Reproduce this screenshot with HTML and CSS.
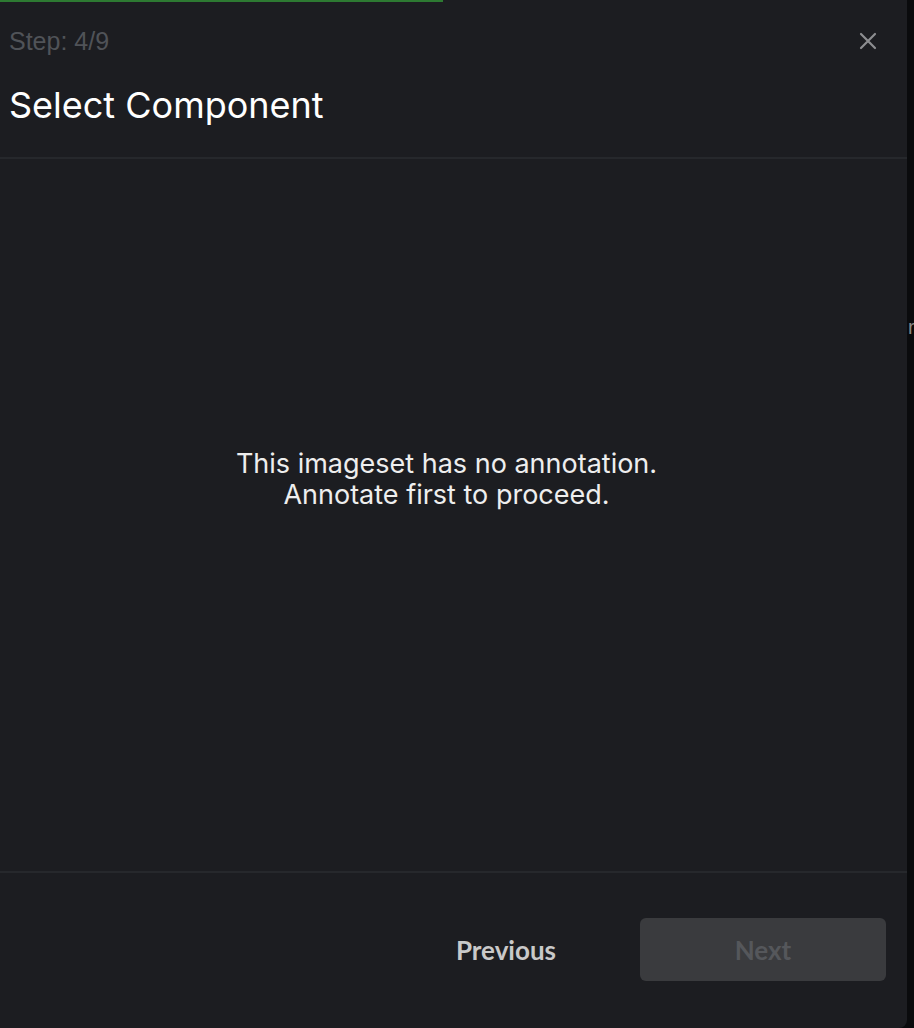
FILE: index.html
```html
<!DOCTYPE html>
<html>
<head>
<meta charset="utf-8">
<link rel="stylesheet" href="styles.css">
</head>
<body>
<div class="page">
  <section class="modal">
    <div class="progress"><div class="progress-fill" style="width:443px"></div></div>
    <header class="modal-header">
      <div class="header-top">
        <span class="step">Step: 4/9</span>
        <button class="close" aria-label="Close">
          <svg width="18" height="18" viewBox="0 0 18 18"><path d="M2 2L16 16M16 2L2 16" stroke="#8c8d90" stroke-width="2.2" stroke-linecap="round"/></svg>
        </button>
      </div>
      <h1 class="title">Select Component</h1>
    </header>
    <main class="modal-body">
      <p class="empty">This imageset has no annotation.<br>Annotate first to proceed.</p>
    </main>
    <footer class="modal-footer">
      <button class="btn-prev">Previous</button>
      <button class="btn-next" disabled>Next</button>
    </footer>
  </section>
  <aside class="strip"><span class="strip-char">r</span></aside>
</div>
</body>
</html>
```
FILE: styles.css
```css
* { box-sizing: border-box; }
html, body { margin: 0; padding: 0; }
body {
  background: #0a0b0d;
  font-family: Inter, "Liberation Sans", sans-serif;
  width: 914px;
  height: 1028px;
  overflow: hidden;
}
.page { display: flex; height: 1028px; }
.modal {
  width: 907px;
  height: 1028px;
  background: #1c1d21;
  border-bottom-right-radius: 8px;
  display: flex;
  flex-direction: column;
}
.progress { height: 2px; background: transparent; }
.progress-fill { height: 2px; background: #2d7a32; }
.modal-header {
  padding: 26px 30px 0 9px;
  height: 157px;
  border-bottom: 2px solid #26282c;
}
.header-top {
  display: flex;
  justify-content: space-between;
  align-items: center;
  height: 26px;
}
.step {
  color: #505358;
  font-size: 25px;
  font-family: "Liberation Sans", Arial, sans-serif;
}
.close {
  background: none;
  border: 0;
  padding: 0;
  width: 18px;
  height: 18px;
  display: flex;
}
.title {
  margin: 31px 0 0 0;
  font-weight: 400;
  font-size: 36px;
  line-height: 40px;
  color: #ffffff;
  font-family: Inter, "Liberation Sans", sans-serif;
}
.modal-body {
  flex: 1;
  display: flex;
  align-items: center;
  justify-content: center;
  padding-bottom: 72px;
  border-bottom: 2px solid #26282c;
}
.empty {
  margin: 0;
  text-align: center;
  color: #eeeeee;
  font-size: 27px;
  line-height: 31px;
  padding-right: 14px;
}
.modal-footer {
  height: 155px;
  display: flex;
  justify-content: flex-end;
  align-items: center;
  padding: 0 21px 2px 0;
}
.btn-prev {
  background: none;
  border: 0;
  padding: 0;
  color: #c9c9c9;
  font-family: Lato, "Liberation Sans", sans-serif;
  font-weight: 700;
  font-size: 26px;
  margin-right: 84px;
}
.btn-next {
  width: 246px;
  height: 63px;
  border: 0;
  border-radius: 6px;
  background: #3a3b3e;
  color: #55575b;
  font-family: Lato, "Liberation Sans", sans-serif;
  font-weight: 700;
  font-size: 26px;
}
.strip {
  width: 7px;
  position: relative;
  overflow: hidden;
}
.strip-char {
  position: absolute;
  left: 1px;
  top: 316px;
  color: #8a8a8a;
  font-size: 20px;
  font-family: "Liberation Sans", sans-serif;
}
```
